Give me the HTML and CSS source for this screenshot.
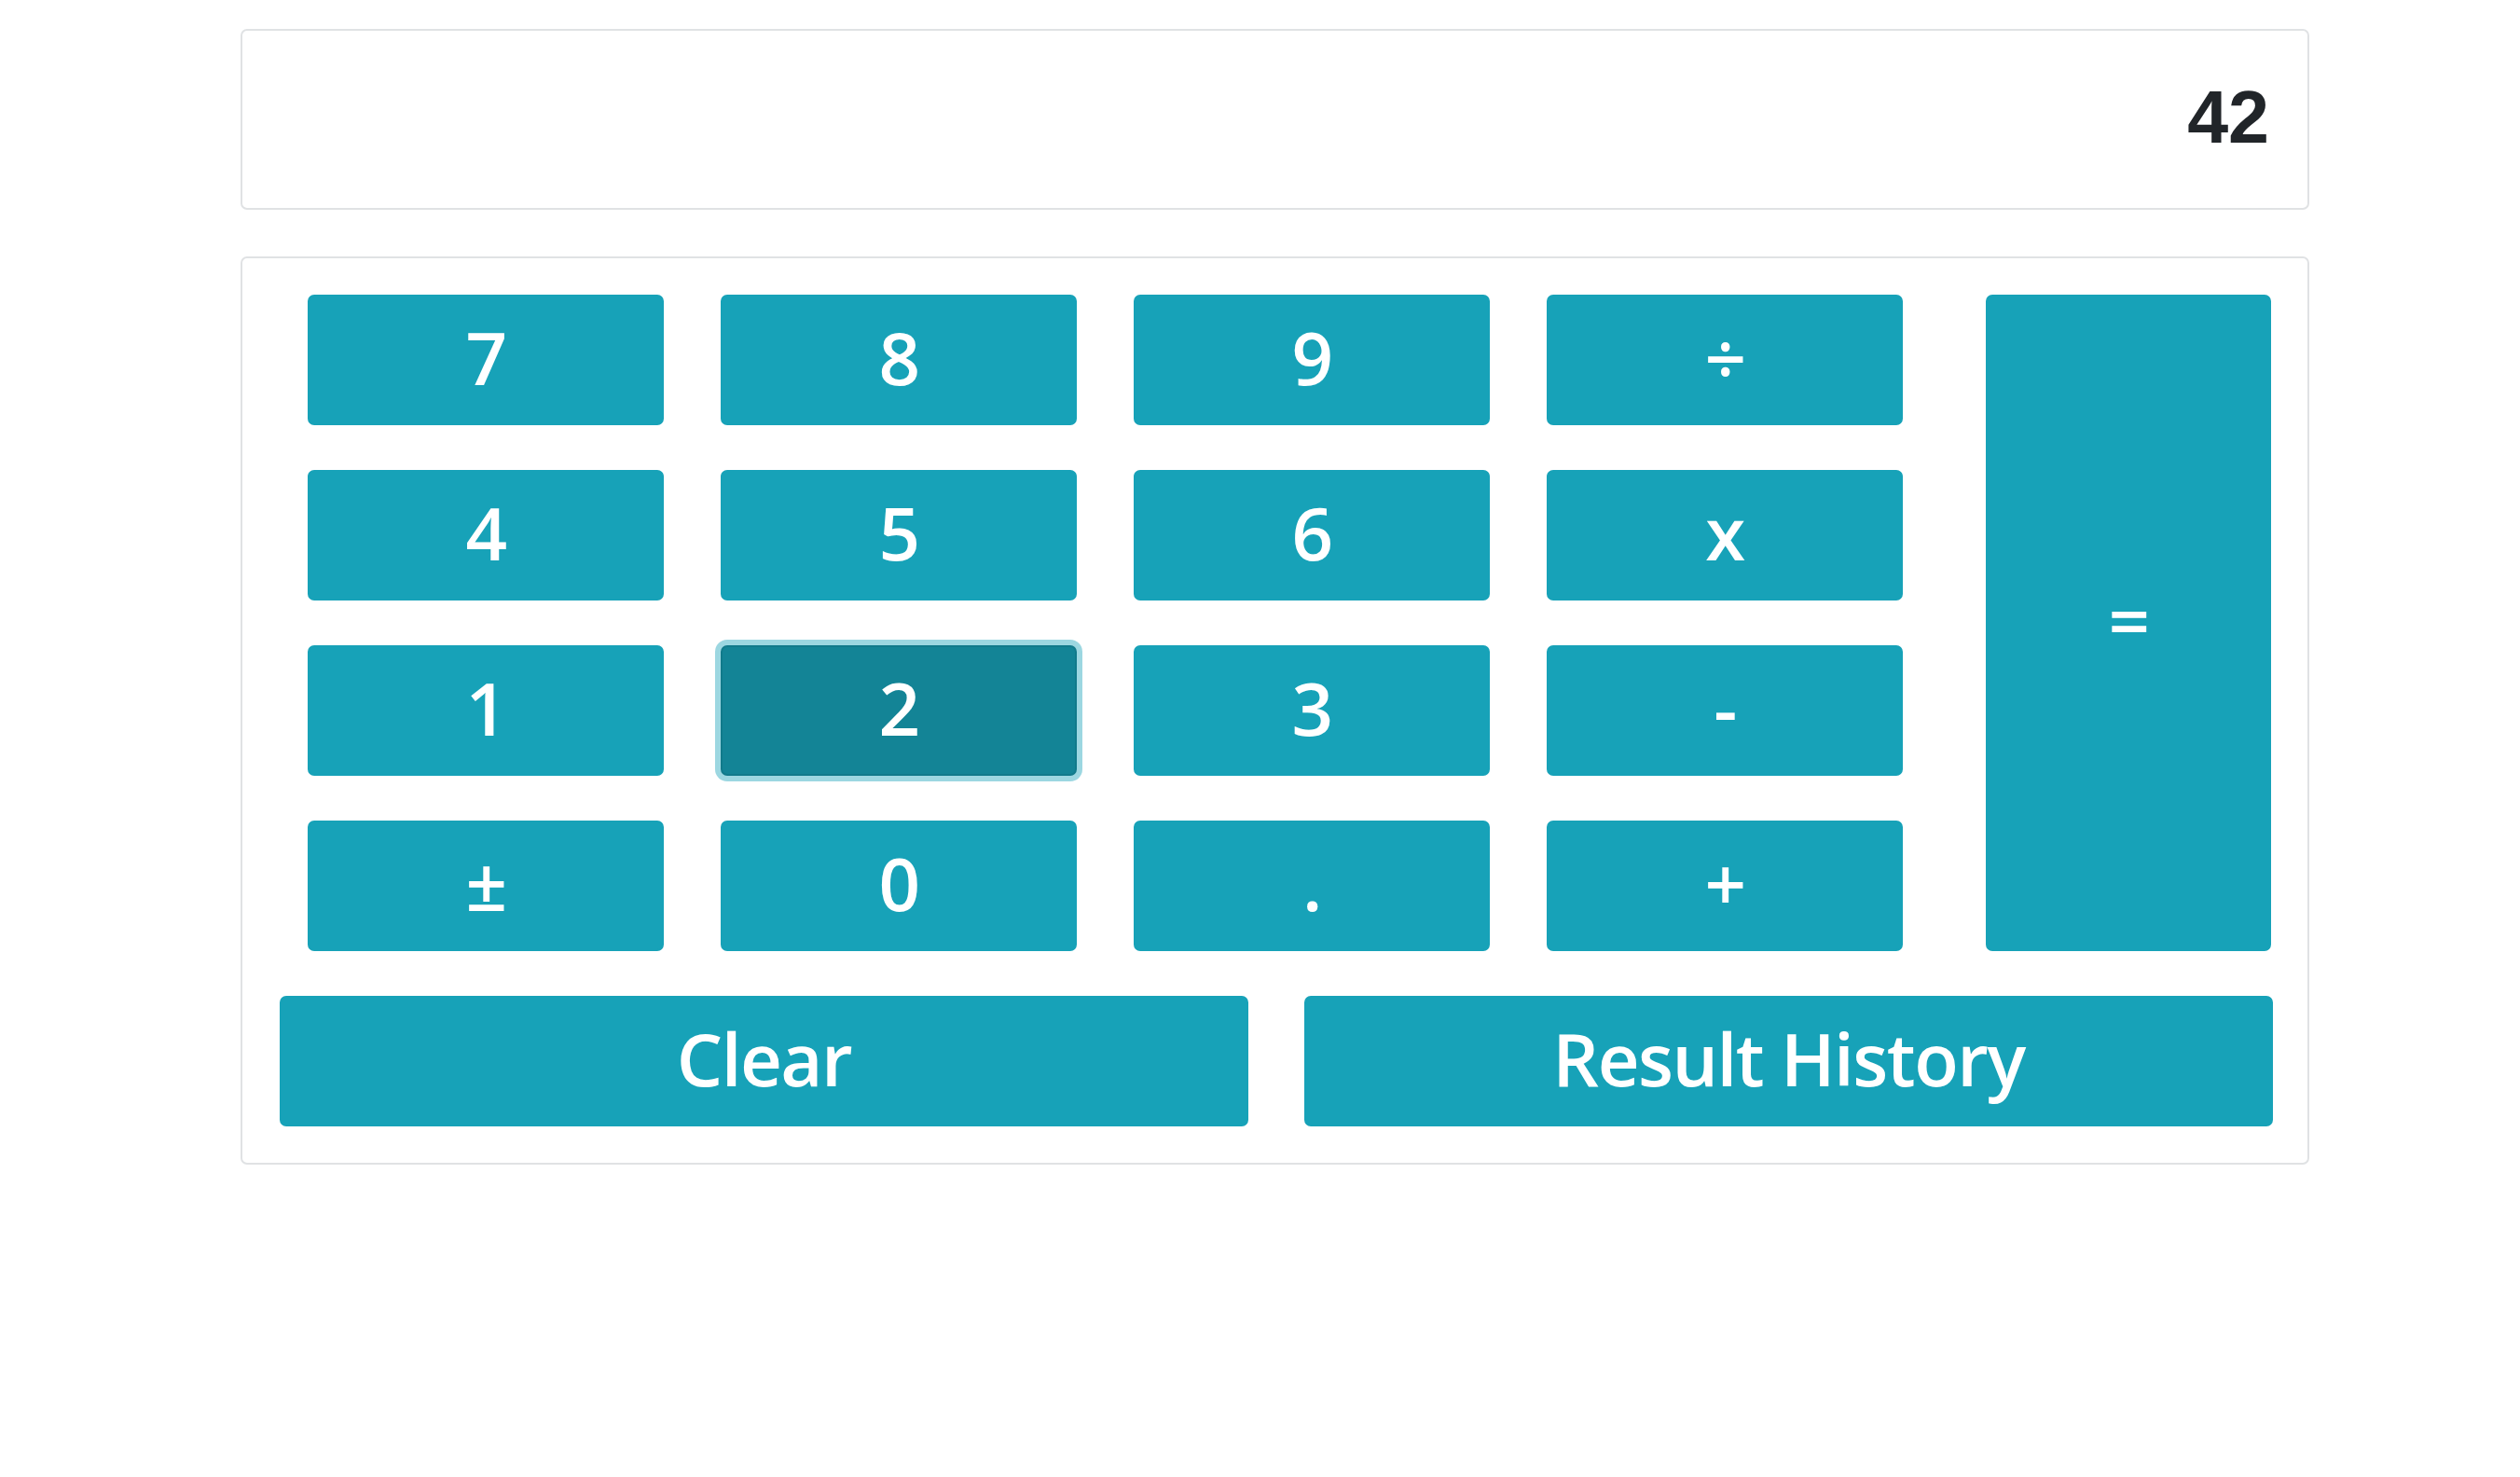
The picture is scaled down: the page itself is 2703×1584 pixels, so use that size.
FILE: index.html
```html
<!DOCTYPE html>
<html lang="en">
<head>
<meta charset="utf-8">
<title>Calculator</title>
<link rel="stylesheet" href="styles.css">
</head>
<body>
<div class="display">42</div>
<div class="pad">
  <div class="keys">
    <div class="numgrid">
      <button class="btn">7</button>
      <button class="btn">8</button>
      <button class="btn">9</button>
      <button class="btn">÷</button>
      <button class="btn">4</button>
      <button class="btn">5</button>
      <button class="btn">6</button>
      <button class="btn">x</button>
      <button class="btn">1</button>
      <button class="btn btn-focus">2</button>
      <button class="btn">3</button>
      <button class="btn">-</button>
      <button class="btn">±</button>
      <button class="btn">0</button>
      <button class="btn">.</button>
      <button class="btn">+</button>
    </div>
    <button class="btn btn-equals">=</button>
  </div>
  <div class="bottom">
    <button class="btn btn-wide">Clear</button>
    <button class="btn btn-wide">Result History</button>
  </div>
</div>
</body>
</html>
```
FILE: styles.css
```css
* { box-sizing: border-box; }
html, body { margin: 0; padding: 0; background: #ffffff; }
body { padding: 31px 0 0 258px; }

.display {
  width: 2219px;
  height: 194px;
  border: 2px solid #e0e2e4;
  border-radius: 7px;
  display: flex;
  align-items: center;
  justify-content: flex-end;
  padding-right: 41px;
  padding-bottom: 4px;
  font-family: "Liberation Sans", Arial, sans-serif;
  font-weight: 700;
  font-size: 79px;
  color: #212529;
}

.pad {
  margin-top: 50px;
  width: 2219px;
  height: 974px;
  border: 2px solid #e0e2e4;
  border-radius: 7px;
  padding: 39px 37px 39px 40px;
}

.keys {
  display: flex;
  height: 704px;
}

.numgrid {
  margin-left: 30px;
  display: grid;
  grid-template-columns: repeat(4, 382px);
  grid-template-rows: repeat(4, 140px);
  column-gap: 61px;
  row-gap: 48px;
}

.btn {
  display: flex;
  align-items: center;
  justify-content: center;
  height: 140px;
  margin: 0;
  padding: 0 0 6px 0;
  border: 2px solid #17a2b8;
  border-radius: 7px;
  background: #17a2b8;
  color: #ffffff;
  font-family: "Open Sans", "Noto Sans", sans-serif;
  font-weight: 600;
  font-size: 78px;
  letter-spacing: -1.5px;
  line-height: 1;
}

.btn-focus {
  background: #138496;
  border-color: #117a8b;
  box-shadow: 0 0 0 6px rgba(58, 176, 195, 0.5);
}

.btn-equals {
  margin-left: 89px;
  width: 306px;
  height: 704px;
}

.bottom {
  display: flex;
  gap: 60px;
  margin-top: 48px;
}

.btn-wide {
  flex: 1;
}
```
